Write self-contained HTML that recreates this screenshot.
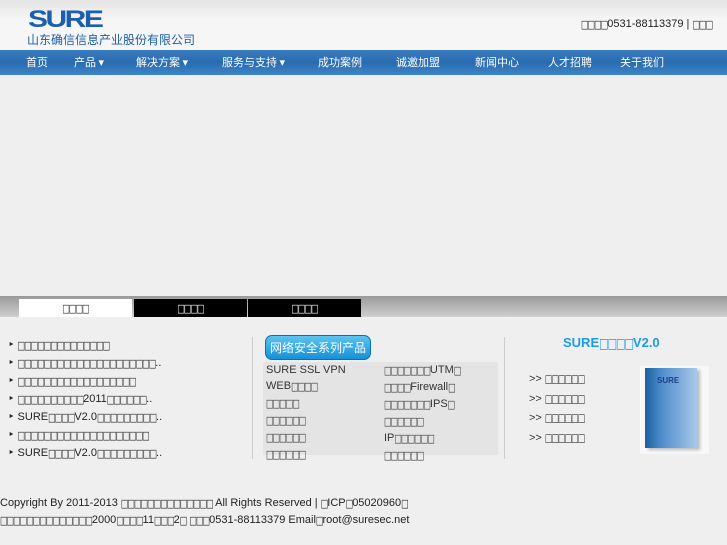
<!DOCTYPE html>
<html><head><meta charset="utf-8"><style>
*{margin:0;padding:0;box-sizing:border-box}
body{width:727px;height:545px;background:#efefef;font-family:"Liberation Sans","DejaVu Sans",sans-serif;font-size:11px;color:#222;position:relative;overflow:hidden}
.a{position:absolute;white-space:nowrap}
.b{font-family:"DejaVu Sans",sans-serif;font-size:8px;letter-spacing:-1px;display:inline-block;transform:scaleY(1.4)}
#hdr{left:0;top:0;width:727px;height:50px;background:linear-gradient(#e4e4e4,#f6f6f6 40%,#f6f6f6)}
#nav{left:0;top:50px;width:727px;height:25px;background:linear-gradient(#3a7cc0,#2a6bb0 50%,#3c85c8)}
#nav span{position:absolute;top:6px;color:#fff;font-family:"Noto Sans CJK SC",sans-serif;font-size:11px;line-height:13px}
#tabs{left:0;top:296px;width:727px;height:21px;background:linear-gradient(#9a9a9a,#cfcfcf)}
.tab{position:absolute;top:3px;height:18px;width:113px;background:#000;color:#fff;text-align:center;line-height:18px}
li{list-style:none;position:absolute;left:8px}
</style></head><body>
<div class="a" id="hdr"></div>
<div class="a" style="left:28px;top:6px;font:bold 24px 'Liberation Sans',sans-serif;color:#1b5fae;letter-spacing:-2px;transform:scaleX(1.25);transform-origin:left">SURE</div>
<div class="a" style="left:27px;top:31px;font:12px 'Noto Sans CJK SC',sans-serif;color:#1d5ea8">山东确信信息产业股份有限公司</div>
<div class="a" style="left:581px;top:18px"><span class="b">□□□□</span>0531-88113379 | <span class="b">□□□</span></div>
<div class="a" id="nav">
<span style="left:26px">首页</span><span style="left:74px">产品 ▾</span><span style="left:136px">解决方案 ▾</span><span style="left:222px">服务与支持 ▾</span><span style="left:318px">成功案例</span><span style="left:396px">诚邀加盟</span><span style="left:475px">新闻中心</span><span style="left:548px">人才招聘</span><span style="left:620px">关于我们</span></div>
<div class="a" id="tabs">
<div class="tab" style="left:19px;background:#fff;color:#222"><span class="b">□□□□</span></div>
<div class="tab" style="left:134px"><span class="b">□□□□</span></div>
<div class="tab" style="left:248px"><span class="b">□□□□</span></div></div>
<ul>
<li style="top:338px">‣ <span class="b">□□□□□□□□□□□□□□</span></li>
<li style="top:356px">‣ <span class="b">□□□□□□□□□□□□□□□□□□□□□</span>..</li>
<li style="top:374px">‣ <span class="b">□□□□□□□□□□□□□□□□□□</span></li>
<li style="top:392px">‣ <span class="b">□□□□□□□□□□</span>2011<span class="b">□□□□□□</span>..</li>
<li style="top:410px">‣ SURE<span class="b">□□□□</span>V2.0<span class="b">□□□□□□□□□</span>..</li>
<li style="top:428px">‣ <span class="b">□□□□□□□□□□□□□□□□□□□□</span></li>
<li style="top:446px">‣ SURE<span class="b">□□□□</span>V2.0<span class="b">□□□□□□□□□</span>..</li>
</ul>
<div class="a" style="left:252px;top:337px;width:1px;height:122px;background:#ccc"></div>
<div class="a" style="left:504px;top:337px;width:1px;height:122px;background:#ccc"></div>
<div class="a" style="left:265px;top:335px;width:106px;height:25px;border-radius:7px;background:linear-gradient(#5cc4f0,#1590d8);border:1px solid #0b6fb0;color:#fff;font:12px 'Noto Sans CJK SC',sans-serif;text-align:center;line-height:23px">网络安全系列产品</div>
<div class="a" style="left:263px;top:362px;width:235px;height:93px;background:#e4e4e4"></div>
<div class="a" style="left:266px;top:362px;line-height:16px;color:#333">SURE SSL VPN<br>WEB<span class="b">□□□□</span><br><span class="b">□□□□□</span><br><span class="b">□□□□□□</span><br><span class="b">□□□□□□</span><br><span class="b">□□□□□□</span></div>
<div class="a" style="left:384px;top:362px;line-height:16px;color:#333"><span class="b">□□□□□□□</span>UTM<span class="b">□</span><br><span class="b">□□□□</span>Firewall<span class="b">□</span><br><span class="b">□□□□□□□</span>IPS<span class="b">□</span><br><span class="b">□□□□□□</span><br>IP<span class="b">□□□□□□</span><br><span class="b">□□□□□□</span></div>
<div class="a" style="left:563px;top:335px;font-size:13px;color:#1e9be8;font-weight:bold">SURE<span class="b" style="font-weight:normal;font-size:10px">□□□□</span>V2.0</div>
<div class="a" style="left:529px;top:370px;line-height:18.5px;color:#333">&gt;&gt; <span class="b">□□□□□□</span><br>&gt;&gt; <span class="b">□□□□□□</span><br>&gt;&gt; <span class="b">□□□□□□</span><br>&gt;&gt; <span class="b">□□□□□□</span></div>
<div class="a" style="left:640px;top:366px;width:69px;height:88px;background:#f8f8f8"></div>
<div class="a" style="left:645px;top:368px;width:52px;height:80px;background:linear-gradient(90deg,#1a5fa0,#4d8ccc 30%,#a8c8e8);box-shadow:3px 2px 3px #bbb"><div style="margin:8px 0 0 12px;font:bold 8px sans-serif;color:#1b3f88">SURE</div></div>
<div class="a" style="left:0;top:497px">Copyright By 2011-2013 <span class="b">□□□□□□□□□□□□□□</span> All Rights Reserved | <span class="b">□</span>ICP<span class="b">□</span>05020960<span class="b">□</span></div>
<div class="a" style="left:0;top:514px"><span class="b">□□□□□□□□□□□□□□</span>2000<span class="b">□□□□</span>11<span class="b">□□□</span>2<span class="b">□</span> <span class="b">□□□</span>0531-88113379 Email<span class="b">□</span>root@suresec.net</div>
</body></html>
